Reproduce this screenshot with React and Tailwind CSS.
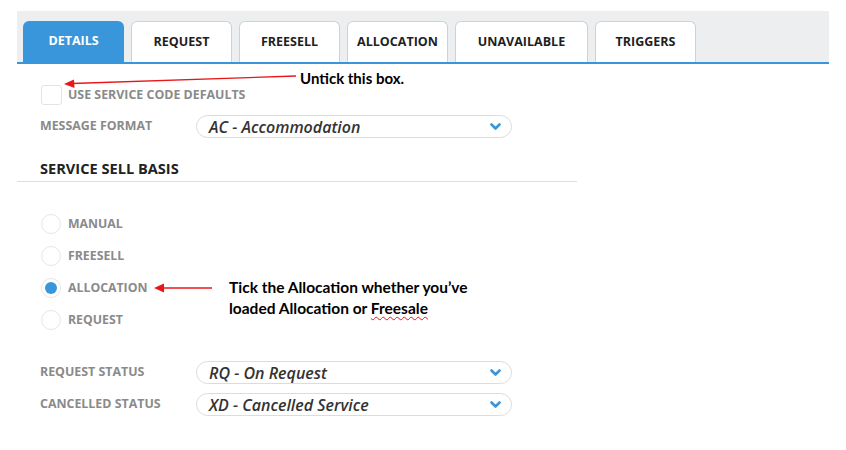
import React from "react";

const TABS = ["DETAILS", "REQUEST", "FREESELL", "ALLOCATION", "UNAVAILABLE", "TRIGGERS"];

const Chevron = () => (
  <svg width="11" height="8" viewBox="0 0 11 8" className="absolute right-[10px] top-1/2 -translate-y-1/2">
    <path d="M1.5 1.5 L5.5 5.5 L9.5 1.5" fill="none" stroke="#3a96db" strokeWidth="2.6" strokeLinecap="round" strokeLinejoin="round" />
  </svg>
);

const Select = ({ value }) => (
  <div className="relative flex h-[23px] w-[316px] items-center rounded-full border border-[#dcdcdc] bg-white pl-[12px] text-[16px] font-semibold italic text-[#333]">
    {value}
    <Chevron />
  </div>
);

const FieldRow = ({ label, value, className = "" }) => (
  <div className={`flex items-center ${className}`}>
    <div className="w-[179px] pl-[23px] text-[12.4px] font-bold text-[#8a8a8a]">{label}</div>
    <Select value={value} />
  </div>
);

const Radio = ({ label, checked }) => (
  <div className="flex h-[32px] items-center pl-[24px]">
    <span className="flex h-[20px] w-[20px] items-center justify-center rounded-full border border-[#e6e6e6] bg-white">
      {checked && <span className="h-[12px] w-[12px] rounded-full bg-[#3a96db]" />}
    </span>
    <span className="ml-[7px] text-[12.3px] font-bold text-[#8a8a8a]">{label}</span>
  </div>
);

const Arrows = () => (
  <svg width="846" height="450" className="pointer-events-none absolute left-0 top-0">
    <line x1="296" y1="76" x2="72" y2="83.5" stroke="#e8161b" strokeWidth="1.4" />
    <polygon points="64,84 74,79.5 74.5,88" fill="#e8161b" />
    <line x1="212" y1="288" x2="162" y2="288" stroke="#e8161b" strokeWidth="1.4" />
    <polygon points="154,288 164,283.5 164,292.5" fill="#e8161b" />
  </svg>
);

export default function App() {
  return (
    <div className="relative h-[450px] w-[846px] overflow-hidden bg-white font-['Open_Sans',sans-serif]">
      <div className="ml-[17px] pt-[11px] w-[812px]">
        <div className="flex gap-[7px] border-b-2 border-[#3a96db] bg-[#eceeef] pl-[6px] pt-[10px]">
          {TABS.map((t, i) => (
            <div
              key={t}
              className={`flex h-[41px] items-center justify-center rounded-t-[6px] text-[12.5px] font-bold ${
                i === 0
                  ? "bg-[#3a96db] text-white"
                  : "border border-b-0 border-[#cfd2d4] bg-white text-[#1e1e24]"
              } ${t === "UNAVAILABLE" ? "w-[133px]" : "w-[101px]"}`}
            >
              {t}
            </div>
          ))}
        </div>

        <div className="mt-[21px] flex items-center pl-[24px]">
          <span className="h-[20px] w-[21px] rounded-[3px] border border-[#e3e3e3] bg-white" />
          <span className="ml-[6px] text-[12.4px] font-bold text-[#8a8a8a]">USE SERVICE CODE DEFAULTS</span>
        </div>

        <FieldRow label="MESSAGE FORMAT" value="AC - Accommodation" className="mt-[10px]" />

        <div className="mt-[21px] w-[560px] border-b border-[#dcdcec] pb-[3px] pl-[23px] text-[14.6px] font-bold leading-[19px] text-[#222]">
          SERVICE SELL BASIS
        </div>

        <div className="mt-[26px] flex flex-col">
          <Radio label="MANUAL" />
          <Radio label="FREESELL" />
          <Radio label="ALLOCATION" checked />
          <Radio label="REQUEST" />
        </div>

        <FieldRow label="REQUEST STATUS" value="RQ - On Request" className="mt-[25px]" />
        <FieldRow label="CANCELLED STATUS" value="XD - Cancelled Service" className="mt-[9px]" />
      </div>

      <Arrows />

      <div className="absolute left-[300px] top-[67px] font-['Lato',sans-serif] text-[15px] font-bold text-black">
        Untick this box.
      </div>
      <div className="absolute left-[229px] top-[277px] font-['Lato',sans-serif] text-[15.5px] font-bold leading-[21px] text-black">
        <div>Tick the Allocation whether you’ve</div>
        <div>
          loaded Allocation or{" "}
          <span className="underline decoration-wavy decoration-[#e8161b] decoration-1 underline-offset-2">Freesale</span>
        </div>
      </div>
    </div>
  );
}
